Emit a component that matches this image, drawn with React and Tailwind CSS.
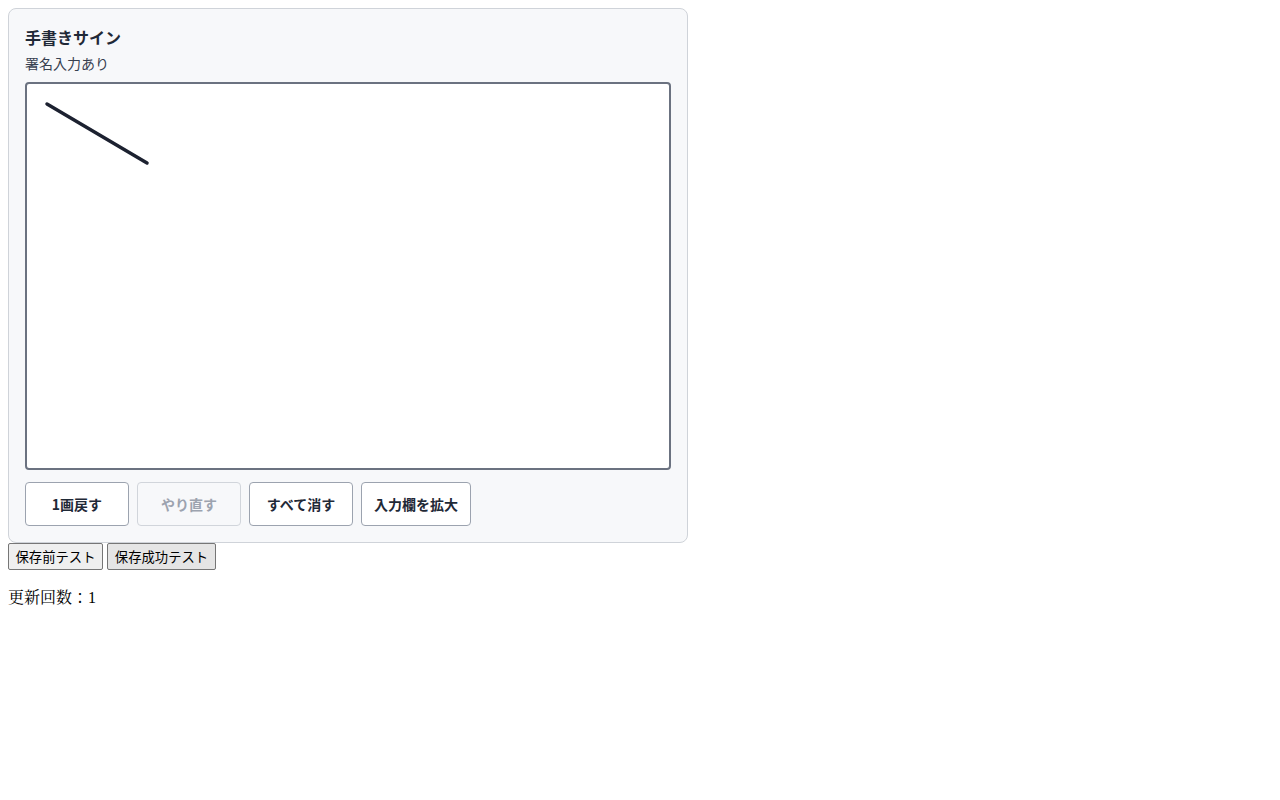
import React from "react";

export default function App() {
  const sans = { fontFamily: '"Noto Sans CJK JP", "Noto Sans", sans-serif' };
  return (
    <div className="p-2 bg-white min-h-[800px]" style={{ fontFamily: '"Liberation Serif", "Noto Serif CJK JP", "Noto Sans CJK JP", serif' }}>
      <div
        className="w-[680px] border border-[#cfd3d9] rounded-lg bg-[#f7f8fa] p-4 font-['Noto_Sans_CJK_JP','Noto_Sans',sans-serif]"
      >
        <h2 className="text-[16px] leading-6 font-bold text-[#1f2937]">手書きサイン</h2>
        <p className="mt-1 text-[14px] leading-5 text-[#374151]">署名入力あり</p>
        <div className="mt-[9px] h-[388px] border-2 border-[#6b7280] rounded bg-white relative">
          <svg className="absolute inset-0" width="642" height="384">
            <line x1="20" y1="20" x2="120" y2="79" stroke="#1c2130" strokeWidth="3.5" strokeLinecap="round" />
          </svg>
        </div>
        <div className="mt-3 flex gap-2">
          <button className="w-[104px] h-[44px] border border-[#9ca3af] rounded bg-white text-[14px] font-bold text-[#1f2937]">1画戻す</button>
          <button disabled className="w-[104px] h-[44px] border border-[#d1d5db] rounded bg-[#f7f8fa] text-[14px] font-bold text-[#9ca3af]">やり直す</button>
          <button className="w-[104px] h-[44px] border border-[#9ca3af] rounded bg-white text-[14px] font-bold text-[#1f2937]">すべて消す</button>
          <button className="w-[110px] h-[44px] border border-[#9ca3af] rounded bg-white text-[14px] font-bold text-[#1f2937]">入力欄を拡大</button>
        </div>
      </div>
      <div className="flex gap-1" style={sans}>
        <button className="w-[95px] h-[27px] border border-[#767676] rounded-[2px] bg-[#efefef] text-[13.33px] text-black">保存前テスト</button>
        <button className="w-[109px] h-[27px] border border-[#767676] rounded-[2px] bg-[#e5e5e5] text-[13.33px] text-black">保存成功テスト</button>
      </div>
      <p className="mt-4 text-[16px] leading-[24px] text-black">更新回数：1</p>
    </div>
  );
}
